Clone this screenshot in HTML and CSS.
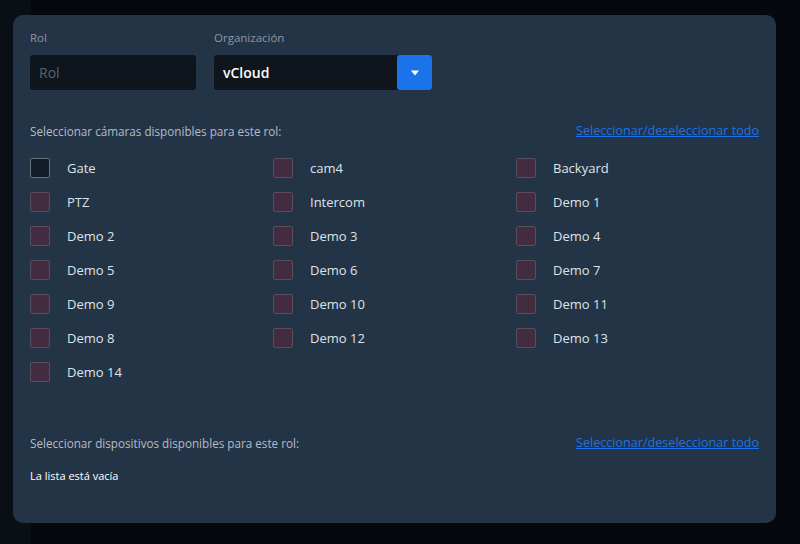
FILE: index.html
```html
<!DOCTYPE html>
<html lang="es">
<head>
    <meta charset="UTF-8">
    <meta name="viewport" content="width=device-width, initial-scale=1.0">
    <title>Roles</title>
    <link rel="stylesheet" href="styles.css">
</head>
<body>
    <div class="page">
        <aside class="sidebar"></aside>
        <main class="main"></main>
    </div>

    <!-- Modal de rol -->
    <div class="modal">
        <div class="form-row">
            <div class="field field-rol">
                <label for="rol">Rol</label>
                <input type="text" id="rol" placeholder="Rol">
            </div>
            <div class="field field-org">
                <label>Organización</label>
                <div class="select">
                    <span class="select-value">vCloud</span>
                    <button class="select-btn">
                        <svg width="10" height="6" viewBox="0 0 10 6"><path d="M1 0.5h8L5 5.5z" fill="#fff"/></svg>
                    </button>
                </div>
            </div>
        </div>

        <div class="section-head">
            <span>Seleccionar cámaras disponibles para este rol:</span>
            <a href="#">Seleccionar/deseleccionar todo</a>
        </div>

        <div class="camera-grid">
            <label class="check"><span class="box box-empty"></span>Gate</label>
            <label class="check"><span class="box"></span>cam4</label>
            <label class="check"><span class="box"></span>Backyard</label>
            <label class="check"><span class="box"></span>PTZ</label>
            <label class="check"><span class="box"></span>Intercom</label>
            <label class="check"><span class="box"></span>Demo 1</label>
            <label class="check"><span class="box"></span>Demo 2</label>
            <label class="check"><span class="box"></span>Demo 3</label>
            <label class="check"><span class="box"></span>Demo 4</label>
            <label class="check"><span class="box"></span>Demo 5</label>
            <label class="check"><span class="box"></span>Demo 6</label>
            <label class="check"><span class="box"></span>Demo 7</label>
            <label class="check"><span class="box"></span>Demo 9</label>
            <label class="check"><span class="box"></span>Demo 10</label>
            <label class="check"><span class="box"></span>Demo 11</label>
            <label class="check"><span class="box"></span>Demo 8</label>
            <label class="check"><span class="box"></span>Demo 12</label>
            <label class="check"><span class="box"></span>Demo 13</label>
            <label class="check"><span class="box"></span>Demo 14</label>
        </div>

        <div class="section-head section-devices">
            <span>Seleccionar dispositivos disponibles para este rol:</span>
            <a href="#">Seleccionar/deseleccionar todo</a>
        </div>
        <p class="empty">La lista está vacía</p>
    </div>
</body>
</html>
```

FILE: styles.css
```css
body {
    margin: 0;
    font-family: "Open Sans", "DejaVu Sans", sans-serif;
    background-color: #05080c;
    color: #dfe3e8;
}

.page {
    display: flex;
    height: 544px;
}

.sidebar {
    width: 31px;
    background-color: #0a0f15;
}

.main {
    flex: 1;
}

.modal {
    position: absolute;
    left: 13px;
    top: 15px;
    width: 763px;
    height: 508px;
    box-sizing: border-box;
    padding: 15px 17px 0 17px;
    background-color: #243447;
    border-radius: 10px;
}

.form-row {
    display: flex;
    gap: 18px;
}

.field label {
    display: block;
    font-size: 11.5px;
    color: #8c97a3;
    height: 15px;
    margin-bottom: 10px;
}

.field-rol input {
    width: 166px;
    height: 35px;
    box-sizing: border-box;
    border: none;
    border-radius: 3px;
    background-color: #0f151c;
    padding: 0 9px;
    font-family: inherit;
    font-size: 14px;
    color: #fff;
    outline: none;
}

.field-rol input::placeholder {
    color: #5a6470;
}

.select {
    display: flex;
    width: 218px;
    height: 35px;
    border-radius: 3px;
    background-color: #0f151c;
}

.select-value {
    flex: 1;
    display: flex;
    align-items: center;
    padding-left: 9px;
    font-size: 14px;
    font-weight: 600;
    color: #fff;
}

.select-btn {
    width: 35px;
    border: none;
    border-radius: 3px;
    background-color: #1a73e8;
    display: flex;
    align-items: center;
    justify-content: center;
    padding: 0;
    cursor: pointer;
}

.section-head {
    display: flex;
    justify-content: space-between;
    align-items: center;
    margin-top: 32px;
    font-size: 11.7px;
    color: #b4bcc5;
}

.section-head a {
    color: #1a73e8;
    font-size: 12.6px;
}

.camera-grid {
    display: grid;
    grid-template-columns: repeat(3, 243px);
    grid-auto-rows: 34px;
    margin-top: 12px;
}

.check {
    display: flex;
    align-items: center;
    font-size: 13px;
    color: #dfe3e8;
    cursor: pointer;
}

.box {
    width: 20px;
    height: 20px;
    box-sizing: border-box;
    border: 1px solid #5a4d5c;
    border-radius: 2px;
    background-color: #432b40;
    margin-right: 17px;
}

.box-empty {
    background-color: #131c26;
    border-color: #6b737c;
}

.section-devices {
    margin-top: 45px;
}

.empty {
    margin: 17px 0 0 0;
    font-size: 11px;
    color: #fff;
}
```
